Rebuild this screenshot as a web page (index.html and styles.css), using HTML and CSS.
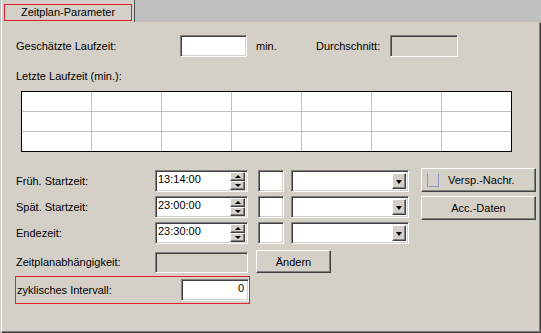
FILE: index.html
```html
<!DOCTYPE html>
<html lang="de">

<head>
    <meta charset="UTF-8">
    <title>Zeitplan-Parameter</title>
    <link rel="stylesheet" href="styles.css">
</head>

<body>
    <div class="window">
        <div class="tabs">
            <div class="tab"><span class="tab-label">Zeitplan-Parameter</span></div>
        </div>

        <div class="panel">
            <div class="row-top">
                <span class="lbl-est">Geschätzte Laufzeit:</span>
                <div class="field est"></div>
                <span class="unit">min.</span>
                <span class="lbl-avg">Durchschnitt:</span>
                <div class="field readonly avg"></div>
            </div>

            <div class="caption">Letzte Laufzeit (min.):</div>

            <div class="history">
                <div></div><div></div><div></div><div></div><div></div><div></div><div></div>
                <div></div><div></div><div></div><div></div><div></div><div></div><div></div>
                <div></div><div></div><div></div><div></div><div></div><div></div><div></div>
            </div>

            <div class="times">
                <span class="lbl">Früh. Startzeit:</span>
                <div class="field spin"><span class="val">13:14:00</span><span class="spinner"><i class="up"></i><i class="down"></i></span></div>
                <div class="field small"></div>
                <div class="field combo"><span class="drop"><i></i></span></div>
                <button class="btn first"><span class="check"></span>Versp.-Nachr.</button>

                <span class="lbl">Spät. Startzeit:</span>
                <div class="field spin"><span class="val">23:00:00</span><span class="spinner"><i class="up"></i><i class="down"></i></span></div>
                <div class="field small"></div>
                <div class="field combo"><span class="drop"><i></i></span></div>
                <button class="btn center">Acc.-Daten</button>

                <span class="lbl">Endezeit:</span>
                <div class="field spin"><span class="val">23:30:00</span><span class="spinner"><i class="up"></i><i class="down"></i></span></div>
                <div class="field small"></div>
                <div class="field combo"><span class="drop"><i></i></span></div>
            </div>

            <div class="row-dep">
                <span class="lbl">Zeitplanabhängigkeit:</span>
                <div class="field readonly dep"></div>
                <button class="btn change">Ändern</button>
            </div>

            <div class="interval">
                <span class="lbl-int">zyklisches Intervall:</span>
                <div class="field num"><span class="val">0</span></div>
            </div>
        </div>
    </div>
</body>

</html>
```

FILE: styles.css
```css
body {
    margin: 0;
    background: #d4d0c8;
    font-family: 'Liberation Sans', Arial, sans-serif;
    font-size: 11px;
    color: #000;
}

.window {
    width: 541px;
    height: 333px;
    display: flex;
    flex-direction: column;
}

/* Tab strip */
.tabs {
    height: 22px;
    flex: none;
    display: flex;
    background: #c0c0c0;
}

.tab {
    width: 131px;
    margin-left: 1px;
    border-left: 1px solid #fff;
    border-right: 1px solid #505050;
    background: #d4d0c8;
    padding: 4px 0 0 2px;
    box-sizing: border-box;
    width: 134px;
}

.tab-label {
    display: block;
    width: 128px;
    height: 17px;
    box-sizing: border-box;
    border: 1px solid #e0202a;
    text-align: center;
    line-height: 15px;
}

/* Panel */
.panel {
    flex: 1;
    margin-left: 1px;
    border-left: 1px solid #fff;
    border-right: 1px solid #808080;
    border-bottom: 1px solid #808080;
    box-shadow: 1px 1px 0 #404040;
    margin-right: 1px;
    margin-bottom: 1px;
    padding: 13px 0 0 14px;
}

/* Sunken fields */
.field {
    box-sizing: border-box;
    height: 22px;
    background: #fff;
    border: 1px solid;
    border-color: #808080 #fff #fff #808080;
    box-shadow: inset 1px 1px #404040, inset -1px -1px #d4d0c8;
    padding: 1px 2px 0 2px;
    line-height: 14px;
}

.field.readonly {
    background: #d4d0c8;
}

/* Raised buttons */
.btn {
    box-sizing: border-box;
    background: #d4d0c8;
    border: 1px solid;
    border-color: #fff #404040 #404040 #fff;
    box-shadow: inset -1px -1px #808080;
    font: inherit;
    color: #000;
    padding: 0;
    margin: 0;
}

.row-top {
    display: flex;
    align-items: center;
    height: 22px;
}

.lbl-est {
    width: 164px;
}

.field.est {
    width: 67px;
}

.unit {
    width: 60px;
    margin-left: 9px;
}

.lbl-avg {
    width: 74px;
}

.field.avg {
    width: 68px;
}

.caption {
    margin-top: 13px;
    line-height: 13px;
}

/* Last runtimes grid */
.history {
    margin: 8px 0 0 5px;
    width: 491px;
    box-sizing: border-box;
    border: 1px solid #000;
    display: grid;
    grid-template-columns: repeat(7, 69px);
    grid-template-rows: repeat(3, 19px);
    gap: 1px;
    background: #c0c0c0;
}

.history div {
    background: #fff;
}

/* Start / end times */
.times {
    margin-top: 18px;
    display: grid;
    grid-template-columns: 139px 103px 33px 130px 115px;
    grid-auto-rows: 22px;
    row-gap: 4px;
    align-items: center;
}

.field.spin {
    width: 93px;
    display: flex;
    padding: 1px 1px 1px 2px;
}

.spin .val {
    flex: 1;
}

.spinner {
    width: 15px;
    display: flex;
    flex-direction: column;
    margin-right: 1px;
}

.spinner i {
    flex: 1;
    position: relative;
    background: #d4d0c8;
    border: 1px solid;
    border-color: #fff #404040 #404040 #fff;
    box-shadow: inset -1px -1px #808080;
}

.spinner i::after {
    content: "";
    position: absolute;
    left: 4px;
    top: 2px;
    border-left: 3px solid transparent;
    border-right: 3px solid transparent;
}

.spinner .up::after {
    border-bottom: 3px solid #000;
}

.spinner .down::after {
    border-top: 3px solid #000;
}

.field.small {
    width: 26px;
}

.field.combo {
    width: 118px;
    display: flex;
    justify-content: flex-end;
    padding: 2px;
}

.drop {
    width: 14px;
    height: 16px;
    position: relative;
    box-sizing: border-box;
    background: #d4d0c8;
    border: 1px solid;
    border-color: #fff #404040 #404040 #fff;
    box-shadow: inset -1px -1px #808080;
}

.drop i {
    position: absolute;
    left: 3px;
    top: 6px;
    border-left: 3px solid transparent;
    border-right: 3px solid transparent;
    border-top: 4px solid #000;
}

.btn.first {
    width: 115px;
    height: 24px;
    align-self: start;
    margin-top: -2px;
    display: flex;
    align-items: center;
    padding-left: 5px;
}

.check {
    width: 12px;
    height: 14px;
    box-sizing: border-box;
    border: 1px solid #8c9cc4;
    border-top-color: #d0d6e4;
    margin-right: 9px;
}

.btn.center {
    width: 115px;
    height: 24px;
    align-self: start;
}

/* Dependency row */
.row-dep {
    margin-top: 6px;
    height: 23px;
    display: flex;
    align-items: center;
}

.row-dep .lbl {
    width: 139px;
}

.field.dep {
    width: 93px;
    height: 21px;
    margin-top: 1px;
}

.btn.change {
    width: 75px;
    height: 23px;
    margin-left: 8px;
}

/* Cyclic interval */
.interval {
    margin: 3px 0 0 -1px;
    width: 235px;
    height: 28px;
    box-sizing: border-box;
    border: 1px solid #e0202a;
    display: flex;
    align-items: center;
    padding-left: 1px;
}

.lbl-int {
    width: 164px;
}

.field.num {
    width: 68px;
    text-align: right;
    padding-right: 4px;
}
```
